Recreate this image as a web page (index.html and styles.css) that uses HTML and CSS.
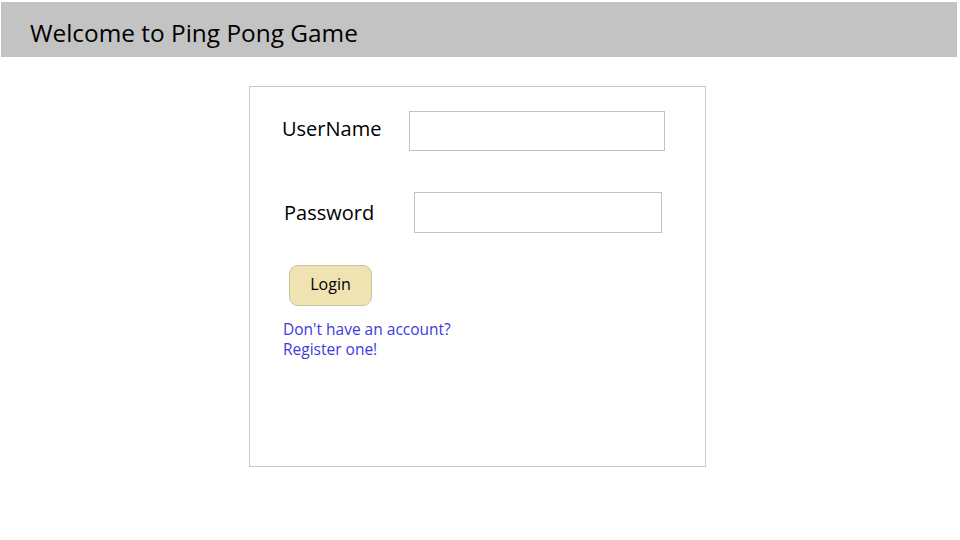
FILE: index.html
```html
<!DOCTYPE html>
<html>
<head>
<meta charset="utf-8">
<link rel="stylesheet" href="styles.css">
</head>
<body>
<header class="topbar"><h1 class="title">Welcome to Ping Pong Game</h1></header>
<main class="card">
  <div class="row row-user">
    <label class="label label-user">UserName</label>
    <input class="field field-user" type="text">
  </div>
  <div class="row row-pass">
    <label class="label">Password</label>
    <input class="field field-pass" type="password">
  </div>
  <button class="login">Login</button>
  <div class="links">
    <a class="link" href="#">Don't have an account?</a>
    <a class="link" href="#">Register one!</a>
  </div>
</main>
</body>
</html>
```
FILE: styles.css
```css
html, body {
  margin: 0;
  background: #ffffff;
}
body {
  padding: 2px 3px 0 1px;
  font-family: "Open Sans", "Noto Sans", sans-serif;
  color: #000;
}
.topbar {
  box-sizing: border-box;
  height: 55px;
  background: #c3c3c3;
  display: flex;
  align-items: center;
  padding: 5px 0 0 29px;
}
.title {
  margin: 0;
  font-weight: normal;
  font-size: 24.4px;
}
.card {
  box-sizing: border-box;
  width: 457px;
  height: 381px;
  margin: 29px 0 0 248px;
  border: 1px solid #c8c8c8;
  padding: 24px 0 0 32px;
}
.row {
  display: flex;
  align-items: center;
}
.label {
  font-size: 20px;
}
.label-user {
  margin-bottom: 5px;
}
.field {
  box-sizing: border-box;
  border: 1px solid #c3c3c3;
  outline: none;
  background: #fff;
}
.row-user .field-user {
  width: 256px;
  height: 40px;
  margin-left: 28px;
}
.row-pass {
  margin-top: 41px;
  padding-left: 2px;
}
.row-pass .field-pass {
  width: 248px;
  height: 41px;
  margin-left: 40px;
}
.login {
  display: block;
  margin: 32px 0 0 7px;
  padding: 0 0 4px;
  width: 83px;
  height: 41px;
  background: #efe4b1;
  border: 1px solid #c8c3a0;
  border-radius: 9px;
  font-family: inherit;
  font-size: 16px;
  color: #000;
}
.links {
  display: flex;
  flex-direction: column;
  margin: 13px 0 0 1px;
}
.link {
  color: #3c3cdc;
  text-decoration: none;
  font-size: 15.5px;
  line-height: 20px;
}
```
